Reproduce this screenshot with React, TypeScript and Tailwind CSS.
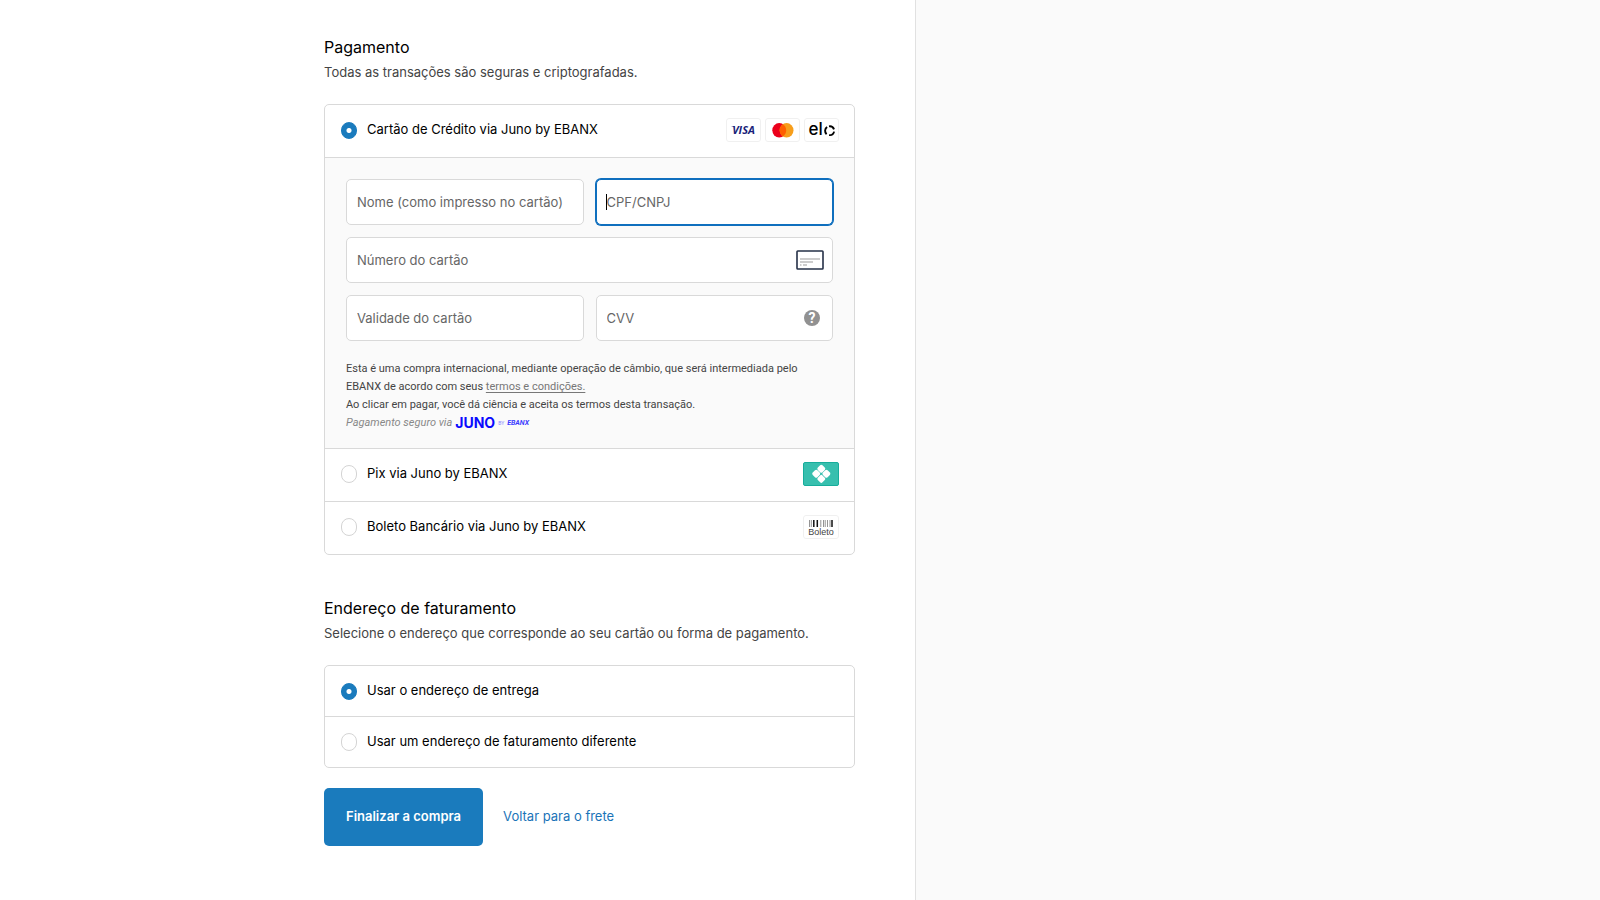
import { useState } from "react";

const VisaLogo = () => (
  <svg width="35" height="24" viewBox="0 0 35 24" role="img" aria-label="Visa">
    <rect x="0.5" y="0.5" width="34" height="23" rx="2.5" fill="#fff" stroke="#f0f0f0" />
    <path d="M5 8h3l1.4 2.2L8.4 9Z" fill="#1a1f7a" />
    <text x="17.5" y="16" textAnchor="middle" fontFamily="Open Sans" fontSize="11" fontWeight="700" fontStyle="italic" fill="#1a1f7a">VISA</text>
  </svg>
);

const MastercardLogo = () => (
  <svg width="35" height="24" viewBox="0 0 35 24" role="img" aria-label="Mastercard">
    <rect x="0.5" y="0.5" width="34" height="23" rx="2.5" fill="#fff" stroke="#f0f0f0" />
    <ellipse cx="14.2" cy="12.3" rx="6.9" ry="7.2" fill="#eb001b" />
    <ellipse cx="21.6" cy="12.3" rx="6.9" ry="7.2" fill="#f79e1b" />
    <path d="M17.9 6.2a7.3 7.3 0 0 1 0 12.2a7.3 7.3 0 0 1 0-12.2Z" fill="#ff5f00" />
  </svg>
);

const EloLogo = () => (
  <svg width="35" height="24" viewBox="0 0 35 24" role="img" aria-label="Elo">
    <rect x="0.5" y="0.5" width="34" height="23" rx="2.5" fill="#fff" stroke="#f0f0f0" />
    <text x="4.5" y="17.4" fontFamily="Inter" fontWeight="500" fontSize="17" fill="#000">el</text>
    <g fill="none" stroke="#000" strokeWidth="1.9">
      <path d="M22.6 16.2a4.6 4.6 0 0 1 .5-7.2" />
      <path d="M25 8.4a4.6 4.6 0 0 1 5 3" />
      <path d="M30.1 13.6a4.6 4.6 0 0 1-5 3.5" />
    </g>
  </svg>
);

const PixLogo = () => (
  <svg width="36" height="24" viewBox="0 0 36 24" role="img" aria-label="Pix">
    <rect x="0.5" y="0.5" width="35" height="23" rx="1.5" fill="#37bfae" stroke="#17ad9b" />
    <g transform="translate(18.3 11.8) rotate(45)" fill="#fff">
      <rect x="-6.9" y="-6.9" width="6.6" height="6.6" rx="1.7" />
      <rect x="0.3" y="-6.9" width="6.6" height="6.6" rx="1.7" />
      <rect x="-6.9" y="0.3" width="6.6" height="6.6" rx="1.7" />
      <rect x="0.3" y="0.3" width="6.6" height="6.6" rx="1.7" />
    </g>
  </svg>
);

const BoletoLogo = () => (
  <svg width="36" height="24" viewBox="0 0 36 24" role="img" aria-label="Boleto">
    <rect x="0.5" y="0.5" width="35" height="23" rx="2.5" fill="#fff" stroke="#f0f0f0" />
    <path d="M6.5 5v7M8.3 5v7M17.8 5v7M20.5 5v7M22.2 5v7M24.5 5v7M27 5v7" stroke="#888" strokeWidth="0.9" />
    <path d="M10.8 5v7M14.3 5v7M29 5v7" stroke="#111" strokeWidth="1.5" />
    <text x="18" y="19.8" textAnchor="middle" fontFamily="Liberation Sans" fontSize="9" fill="#444">Boleto</text>
  </svg>
);

const CardIcon = () => (
  <svg width="28" height="20" viewBox="0 0 28 20" aria-hidden="true">
    <rect x="1" y="1" width="26" height="18" rx="0.8" fill="#fff" stroke="#253047" strokeWidth="1.6" />
    <path d="M4 9h20M4 12h13" stroke="#bdbdbd" strokeWidth="1.7" />
    <path d="M4 15h1.5M7 15h4" stroke="#bdbdbd" strokeWidth="1.5" />
  </svg>
);

const radioClass =
  "h-[18px] w-4 shrink-0 appearance-none rounded-full border border-[#d4d4d4] bg-white checked:h-[17px] checked:border-[#1a7bbd] checked:bg-[radial-gradient(circle,#fff_2px,#1a7bbd_3px)]";

const inputClass =
  "h-[46px] w-full rounded-[5px] bg-white px-[10px] text-[13px] text-[#333] placeholder:text-[#666] outline-none";

const App = () => {
  const [payment, setPayment] = useState("card");
  const [billing, setBilling] = useState("same");

  return (
    <div className="flex min-h-screen bg-white font-['Inter',sans-serif] text-[13px] text-black">
      {/* Checkout form */}
      <main className="flex w-[57.25%] justify-end border-r border-[#e1e1e1] pt-[35px] pr-[60px] pb-9 pl-6">
        <form className="w-full max-w-[531px]" onSubmit={(e) => e.preventDefault()}>
          <h2 className="text-[16px] leading-6">Pagamento</h2>
          <p className="leading-[26px] text-[#444]">Todas as transações são seguras e criptografadas.</p>

          <div className="mt-[19px] rounded-[5px] border border-[#d9d9d9]">
            <div className="flex h-[52px] items-center pr-[15px] pb-0.5 pl-4">
              <input type="radio" id="card" name="payment" className={radioClass} checked={payment === "card"} onChange={() => setPayment("card")} />
              <label htmlFor="card" className="grow pl-[10px]">Cartão de Crédito via Juno by EBANX</label>
              <div className="flex gap-1">
                <VisaLogo />
                <MastercardLogo />
                <EloLogo />
              </div>
            </div>

            {/* Card fields */}
            <div className="border-t border-[#d9d9d9] bg-[#fafafa] px-[21px] pt-[21px] pb-4">
              <div className="grid grid-cols-2 gap-3">
                <input aria-label="Nome (como impresso no cartão)" className={`${inputClass} border border-[#d9d9d9]`} placeholder="Nome (como impresso no cartão)" />
                <div className="relative">
                  <input aria-label="CPF/CNPJ" className={`${inputClass} border border-[#0f6fbe] ring-1 ring-[#0f6fbe]`} placeholder="CPF/CNPJ" />
                  <span className="absolute top-[15px] left-[10px] h-4 w-px bg-black"></span>
                </div>
                <div className="relative col-span-2">
                  <input aria-label="Número do cartão" className={`${inputClass} border border-[#d9d9d9]`} placeholder="Número do cartão" />
                  <span className="absolute inset-y-0 right-[9px] flex items-center"><CardIcon /></span>
                </div>
                <input aria-label="Validade do cartão" className={`${inputClass} border border-[#d9d9d9]`} placeholder="Validade do cartão" />
                <div className="relative">
                  <input aria-label="CVV" className={`${inputClass} border border-[#d9d9d9]`} placeholder="CVV" />
                  <button type="button" aria-label="CVV" className="absolute inset-y-0 right-[13px] flex items-center">
                    <span className="flex h-4 w-4 items-center justify-center rounded-full bg-[#919191] font-['Roboto',sans-serif] text-[14px] font-bold text-white">?</span>
                  </button>
                </div>
              </div>
              <div className="mt-[19px] font-['Roboto',sans-serif] text-[11px] leading-[18px] text-[#444]">
                <p>
                  Esta é uma compra internacional, mediante operação de câmbio, que será intermediada pelo EBANX de acordo com seus{" "}
                  <a href="#" className="text-[#777] underline underline-offset-2">termos e condições.</a>
                </p>
                <p>Ao clicar em pagar, você dá ciência e aceita os termos desta transação.</p>
                <p className="flex items-center gap-[3px] text-[#888]">
                  <em>Pagamento seguro via</em>
                  <span className="font-['Inter',sans-serif] text-[14px] font-bold text-[#0a0aff]">JUNO</span>
                  <span className="text-[5px] text-[#8888ff]">BY</span>
                  <span className="text-[7px] font-bold text-[#3a3aff] italic">EBANX</span>
                </p>
              </div>
            </div>

            <div className="flex h-[53px] items-center border-t border-[#d9d9d9] pr-[15px] pb-0.5 pl-4">
              <input type="radio" id="pix" name="payment" className={radioClass} checked={payment === "pix"} onChange={() => setPayment("pix")} />
              <label htmlFor="pix" className="grow pl-[10px]">Pix via Juno by EBANX</label>
              <PixLogo />
            </div>
            <div className="flex h-[53px] items-center border-t border-[#d9d9d9] pr-[15px] pb-0.5 pl-4">
              <input type="radio" id="boleto" name="payment" className={radioClass} checked={payment === "boleto"} onChange={() => setPayment("boleto")} />
              <label htmlFor="boleto" className="grow pl-[10px]">Boleto Bancário via Juno by EBANX</label>
              <BoletoLogo />
            </div>
          </div>

          {/* Billing address */}
          <h2 className="mt-[41px] text-[16px] leading-6">Endereço de faturamento</h2>
          <p className="leading-[26px] text-[#444]">Selecione o endereço que corresponde ao seu cartão ou forma de pagamento.</p>

          <div className="mt-[19px] rounded-[5px] border border-[#d9d9d9]">
            <div className="flex h-[50px] items-center pr-[15px] pl-4">
              <input type="radio" id="same" name="billing" className={radioClass} checked={billing === "same"} onChange={() => setBilling("same")} />
              <label htmlFor="same" className="grow pl-[10px]">Usar o endereço de entrega</label>
            </div>
            <div className="flex h-[51px] items-center border-t border-[#d9d9d9] pr-[15px] pl-4">
              <input type="radio" id="other" name="billing" className={radioClass} checked={billing === "other"} onChange={() => setBilling("other")} />
              <label htmlFor="other" className="grow pl-[10px]">Usar um endereço de faturamento diferente</label>
            </div>
          </div>

          <div className="mt-5 flex items-center gap-5">
            <button type="submit" className="h-[58px] rounded-[5px] bg-[#1a7bbd] px-[22px] font-semibold text-white">Finalizar a compra</button>
            <a href="#" className="text-[#1a73b8]">Voltar para o frete</a>
          </div>
        </form>
      </main>

      <aside className="grow bg-[#fafafa]"></aside>
    </div>
  );
};

export default App;
